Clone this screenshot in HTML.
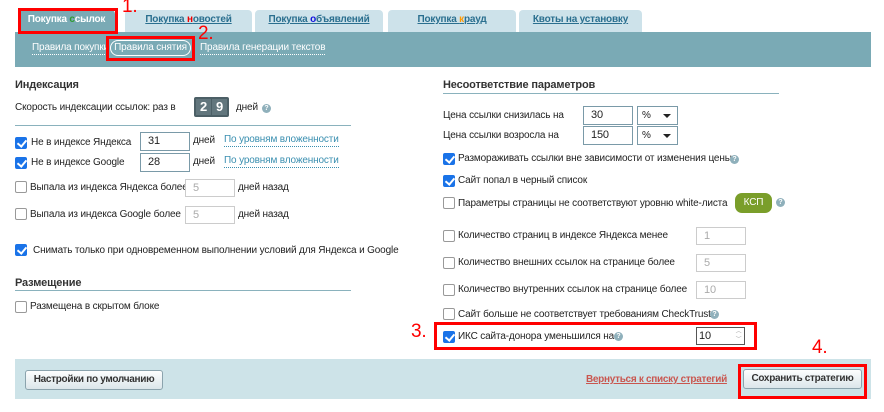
<!DOCTYPE html>
<html><head><meta charset="utf-8"><style>
*{margin:0;padding:0;box-sizing:border-box}
body{width:884px;height:412px;background:#fff;font-family:"Liberation Sans",sans-serif;font-size:10px;color:#222;position:relative;overflow:hidden;letter-spacing:-0.15px}
.a{position:absolute;white-space:nowrap}
.t{margin-top:1px}
.tab{position:absolute;top:10px;height:23px;background:#cde2ea;border-radius:4px 4px 0 0;text-align:center;line-height:20px;font-weight:bold;color:#2a6f8f;text-decoration:underline;font-size:10px;letter-spacing:-0.2px}
.red{position:absolute;border:3px solid #f00}
.num{position:absolute;color:#f00;font-size:19px;font-family:"Liberation Sans",sans-serif}
.cb{position:absolute;width:12px;height:12px;border:1px solid #999;border-radius:2px;background:#fff}
.cb.on{background:#1a73e8;border-color:#1a73e8}
.cb.on:after{content:"";position:absolute;left:3px;top:0px;width:4px;height:7px;border:solid #fff;border-width:0 2px 2px 0;transform:rotate(40deg)}
.in{position:absolute;height:19px;border:1px solid #7a9aa8;background:#fff;padding-left:7px;line-height:17px;font-size:11px}
.in.dis{border-color:#ccc;color:#aaa;height:18px}
.sel{position:absolute;height:19px;border:1px solid #7a9aa8;background:#fff;padding-left:4px;line-height:17px}
.sel:after{content:"";position:absolute;right:6px;top:7px;border:4px solid transparent;border-top:4px solid #222;border-bottom:0}
.q{position:absolute;width:9px;height:9px;border-radius:50%;background:#8fb0bb;color:#fff;font-size:7px;line-height:9px;text-align:center;font-weight:bold}
.h{position:absolute;font-weight:bold;color:#333;font-size:11px}
.line{position:absolute;height:1px;background:#8ab2bd}
.lnk{position:absolute;color:#3a8fb0;border-bottom:1px dotted #3a8fb0;line-height:12px}
.btn{position:absolute;height:20px;border:1px solid #8ba3ad;border-radius:3px;background:linear-gradient(#fdfefe,#dbe6ea);font-weight:bold;color:#333;text-align:center;line-height:18px;letter-spacing:-0.3px}
</style></head><body>
<div class="tab" style="left:18px;width:97px;background:#7aaab5;color:#fff;text-decoration:none;height:24px">Покупка <span style="color:#2e9b2e">с</span>сылок</div>
<div class="tab" style="left:125px;width:127px">Покупка <span style="color:#e00">н</span>овостей</div>
<div class="tab" style="left:255px;width:128px">Покупка <span style="color:#11d">о</span>бъявлений</div>
<div class="tab" style="left:388px;width:128px">Покупка <span style="color:#f90">к</span>рауд</div>
<div class="tab" style="left:519px;width:123px">Квоты на установку</div>
<div class="a" style="left:15px;top:32px;width:856px;height:35px;background:#7aaab5"></div>
<div class="red" style="left:18px;top:8px;width:100px;height:26px"></div>
<div class="num" style="left:122px;top:-4px">1.</div>
<div class="a" style="left:32px;top:42px;color:#fff;border-bottom:1px dotted #fff;line-height:12px">Правила покупки</div>
<div class="a" style="left:110px;top:40px;width:81px;height:16px;border:1px solid #fff;border-radius:9px;color:#fff;text-align:center;line-height:14px">Правила снятия</div>
<div class="red" style="left:106px;top:36px;width:89px;height:25px"></div>
<div class="num" style="left:198px;top:23px">2.</div>
<div class="a" style="left:200px;top:42px;color:#fff;border-bottom:1px dotted #fff;line-height:12px">Правила генерации текстов</div>

<div class="h" style="left:15px;top:79px">Индексация</div>
<div class="a" style="left:15px;top:102px">Скорость индексации ссылок: раз в</div>
<div class="a" style="left:194px;top:97px;width:35px;height:20px;background:#4c5f66;border-radius:2px"></div>
<div class="a" style="left:196px;top:99px;width:15px;height:16px;background:#62767d;color:#fff;font-weight:bold;font-size:13px;text-align:center;line-height:16px">2</div>
<div class="a" style="left:212px;top:99px;width:15px;height:16px;background:#62767d;color:#fff;font-weight:bold;font-size:13px;text-align:center;line-height:16px">9</div>
<div class="a" style="left:236px;top:102px">дней</div>
<div class="q" style="left:262px;top:104px">?</div>
<div class="line" style="left:15px;top:125px;width:336px"></div>

<div class="cb on" style="left:15px;top:137px"></div><div class="a" style="left:31px;top:137px">Не в индексе Яндекса</div>
<div class="in" style="left:140px;top:132px;width:50px">31</div><div class="a" style="left:193px;top:135px">дней</div>
<div class="lnk" style="left:224px;top:134px">По уровням вложенности</div>
<div class="cb on" style="left:15px;top:157px"></div><div class="a" style="left:31px;top:157px">Не в индексе Google</div>
<div class="in" style="left:140px;top:153px;width:50px">28</div><div class="a" style="left:193px;top:156px">дней</div>
<div class="lnk" style="left:224px;top:155px">По уровням вложенности</div>

<div class="cb" style="left:15px;top:181px"></div><div class="a" style="left:30px;top:182px">Выпала из индекса Яндекса более</div>
<div class="in dis" style="left:185px;top:179px;width:50px">5</div><div class="a" style="left:238px;top:182px">дней назад</div>
<div class="cb" style="left:15px;top:208px"></div><div class="a" style="left:30px;top:209px">Выпала из индекса Google более</div>
<div class="in dis" style="left:185px;top:206px;width:50px">5</div><div class="a" style="left:238px;top:209px">дней назад</div>

<div class="cb on" style="left:15px;top:244px"></div><div class="a" style="left:33px;top:245px">Снимать только при одновременном выполнении условий для Яндекса и Google</div>

<div class="h" style="left:15px;top:277px">Размещение</div>
<div class="line" style="left:15px;top:290px;width:336px"></div>
<div class="cb" style="left:15px;top:301px"></div><div class="a" style="left:30px;top:301px">Размещена в скрытом блоке</div>

<div class="h" style="left:443px;top:79px">Несоответствие параметров</div>
<div class="line" style="left:443px;top:93px;width:336px"></div>
<div class="a" style="left:443px;top:110px">Цена ссылки снизилась на</div>
<div class="in" style="left:583px;top:106px;width:50px">30</div><div class="sel" style="left:637px;top:106px;width:41px">%</div>
<div class="a" style="left:443px;top:130px">Цена ссылки возросла на</div>
<div class="in" style="left:583px;top:126px;width:50px">150</div><div class="sel" style="left:637px;top:126px;width:41px">%</div>

<div class="cb on" style="left:443px;top:153px"></div><div class="a" style="left:458px;top:153px">Размораживать ссылки вне зависимости от изменения цены</div><div class="q" style="left:730px;top:155px">?</div>
<div class="cb on" style="left:443px;top:175px"></div><div class="a" style="left:458px;top:175px">Сайт попал в черный список</div>
<div class="cb" style="left:443px;top:197px"></div><div class="a" style="left:458px;top:198px">Параметры страницы не соответствуют уровню white-листа</div>
<div class="a" style="left:735px;top:193px;width:37px;height:20px;background:#7a9e2a;border-radius:7px;color:#fff;text-align:center;line-height:20px">КСП</div><div class="q" style="left:776px;top:198px">?</div>

<div class="cb" style="left:443px;top:230px"></div><div class="a" style="left:458px;top:230px">Количество страниц в индексе Яндекса менее</div>
<div class="in dis" style="left:696px;top:227px;width:50px">1</div>
<div class="cb" style="left:443px;top:257px"></div><div class="a" style="left:458px;top:257px">Количество внешних ссылок на странице более</div>
<div class="in dis" style="left:696px;top:254px;width:50px">5</div>
<div class="cb" style="left:443px;top:284px"></div><div class="a" style="left:458px;top:284px">Количество внутренних ссылок на странице более</div>
<div class="in dis" style="left:696px;top:281px;width:50px">10</div>
<div class="cb" style="left:443px;top:308px"></div><div class="a" style="left:458px;top:309px">Сайт больше не соответствует требованиям CheckTrust</div><div class="q" style="left:710px;top:310px">?</div>

<div class="red" style="left:434px;top:322px;width:323px;height:28px"></div>
<div class="num" style="left:411px;top:321px">3.</div>
<div class="cb on" style="left:443px;top:331px"></div><div class="a" style="left:458px;top:331px">ИКС сайта-донора уменьшился на</div><div class="q" style="left:614px;top:332px">?</div>
<div class="in" style="left:696px;top:327px;width:49px;height:18px;border-color:#555;padding-left:2px;line-height:16px">10</div>
<div class="a" style="left:733px;top:328px;width:11px;height:16px;color:#aaa;font-size:6px;line-height:8px;text-align:center">︿<br>﹀</div>

<div class="a" style="left:15px;top:359px;width:856px;height:40px;background:#cde3e8"></div>
<div class="btn" style="left:25px;top:370px;width:138px">Настройки по умолчанию</div>
<div class="a" style="left:586px;top:374px;color:#c9564f;font-weight:bold;text-decoration:underline;letter-spacing:-0.3px">Вернуться к списку стратегий</div>
<div class="num" style="left:812px;top:337px">4.</div>
<div class="red" style="left:738px;top:364px;width:129px;height:35px"></div>
<div class="btn" style="left:743px;top:369px;width:119px">Сохранить стратегию</div>
</body></html>
